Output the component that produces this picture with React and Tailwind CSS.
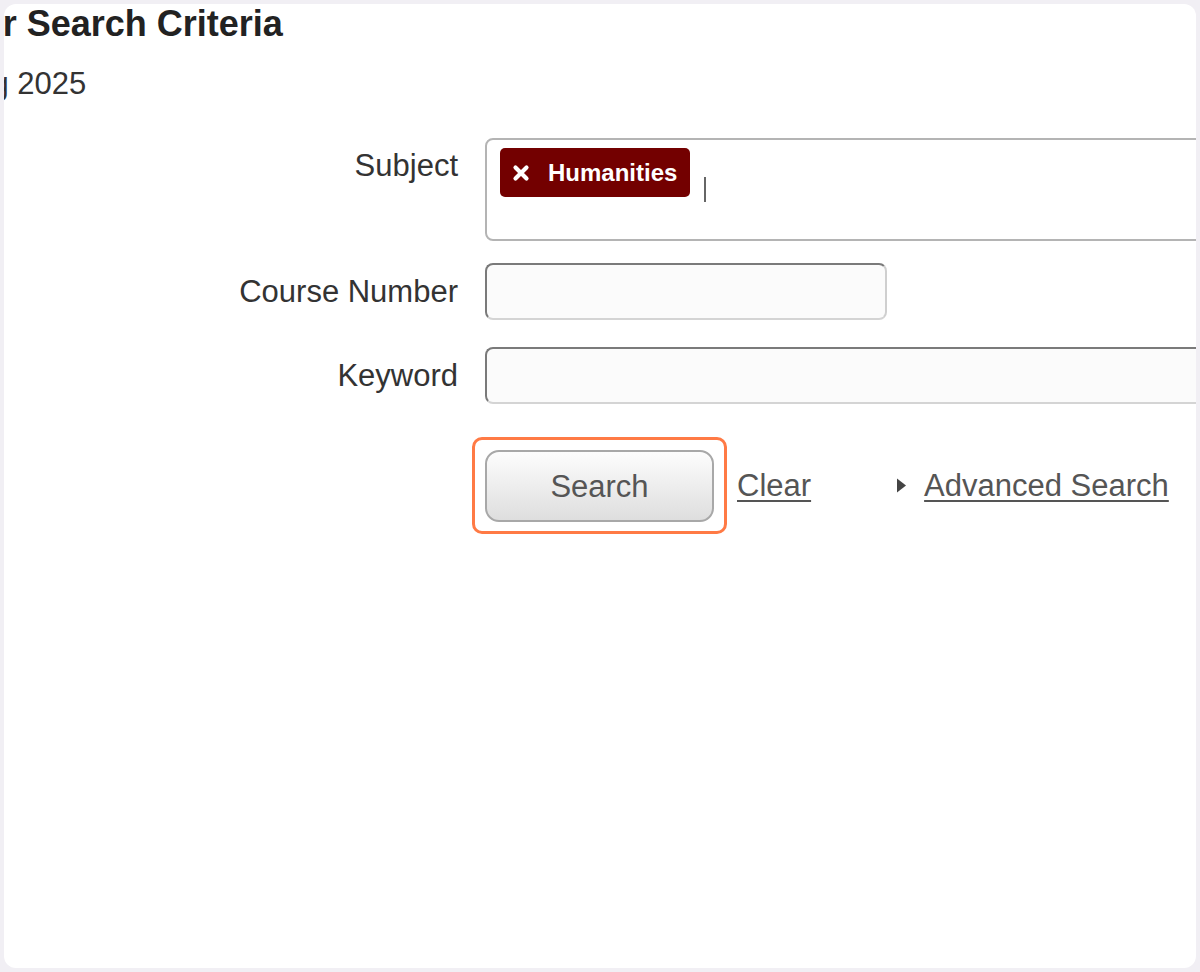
import React from "react";

const font = { fontFamily: '"Liberation Sans", Arial, sans-serif' };

function CloseGlyph() {
  return (
    <svg width="18" height="18" viewBox="0 0 18 18" className="shrink-0">
      <path d="M3.5 3.5 L14.5 14.5 M14.5 3.5 L3.5 14.5" stroke="#ffffff" strokeWidth="4.2" strokeLinecap="round" />
    </svg>
  );
}

function Caret() {
  return (
    <svg width="11" height="17" viewBox="0 0 11 17" className="shrink-0">
      <path d="M1 1.5 L10 8.5 L1 15.5 Z" fill="#444444" />
    </svg>
  );
}

function FieldRow({ label, children, labelClass, rowClass }) {
  return (
    <div className={`flex gap-[27px] ${rowClass}`}>
      <div className={`w-[454px] shrink-0 text-right text-[31px] leading-[36px] text-[#333333] ${labelClass}`}>
        {label}
      </div>
      {children}
    </div>
  );
}

export default function App() {
  return (
    <div className="w-[1200px] h-[972px] bg-[#f1eff4] p-[4px]" style={font}>
      <div className="h-full w-full overflow-hidden rounded-[12px] bg-white">
        <h1 className="-ml-[168px] whitespace-nowrap text-[36px] font-bold leading-[40px] text-[#222222]">
          Enter Your Search Criteria
        </h1>
        <div className="-ml-[171px] mt-[22px] whitespace-nowrap text-[31px] leading-[36px] text-[#333333]">
          Term: Spring 2025
        </div>

        <div className="mt-[36px] flex flex-col">
          <FieldRow label="Subject" labelClass="pt-[10px]" rowClass="items-start">
            <div className="h-[103px] w-[900px] shrink-0 rounded-[8px] border-2 border-[#b4b4b4] bg-white pl-[13px] pt-[8px]">
              <div className="flex items-start">
                <div className="flex h-[49px] items-center gap-[18px] rounded-[5px] bg-[#730000] pl-[12px] pr-[13px]">
                  <CloseGlyph />
                  <span className="text-[24px] font-bold leading-none text-white">Humanities</span>
                </div>
                <div className="ml-[14px] mt-[29px] h-[25px] w-[2px] bg-[#666666]" />
              </div>
            </div>
          </FieldRow>

          <FieldRow label="Course Number" rowClass="mt-[22px] items-center">
            <input
              type="text"
              className="h-[57px] w-[402px] shrink-0 rounded-[8px] border-2 border-t-[#7a7a7a] border-l-[#7a7a7a] border-r-[#cfcfcf] border-b-[#d4d4d4] bg-[#fbfbfb] outline-none"
            />
          </FieldRow>

          <FieldRow label="Keyword" rowClass="mt-[27px] items-center">
            <input
              type="text"
              className="h-[57px] w-[900px] shrink-0 rounded-[8px] border-2 border-t-[#7a7a7a] border-l-[#7a7a7a] border-r-[#cfcfcf] border-b-[#d4d4d4] bg-[#fbfbfb] outline-none"
            />
          </FieldRow>

          <div className="mt-[33px] flex items-center pl-[468px]">
            <div className="rounded-[10px] border-[3px] border-[#ff7a45] px-[10px] pt-[10px] pb-[9px]">
              <button
                type="button"
                className="flex h-[72px] w-[229px] items-center justify-center rounded-[14px] border-2 border-[#a8a8a8] bg-gradient-to-b from-[#fdfdfd] to-[#dedede] text-[31px] leading-none text-[#555555]"
              >
                Search
              </button>
            </div>
            <a href="#" className="ml-[10px] text-[31px] leading-[36px] text-[#555555] underline decoration-2 underline-offset-[4px]">
              Clear
            </a>
            <div className="ml-[85px] flex items-center gap-[17px]">
              <Caret />
              <a href="#" className="text-[31px] leading-[36px] text-[#555555] underline decoration-2 underline-offset-[4px]">
                Advanced Search
              </a>
            </div>
          </div>
        </div>
      </div>
    </div>
  );
}
